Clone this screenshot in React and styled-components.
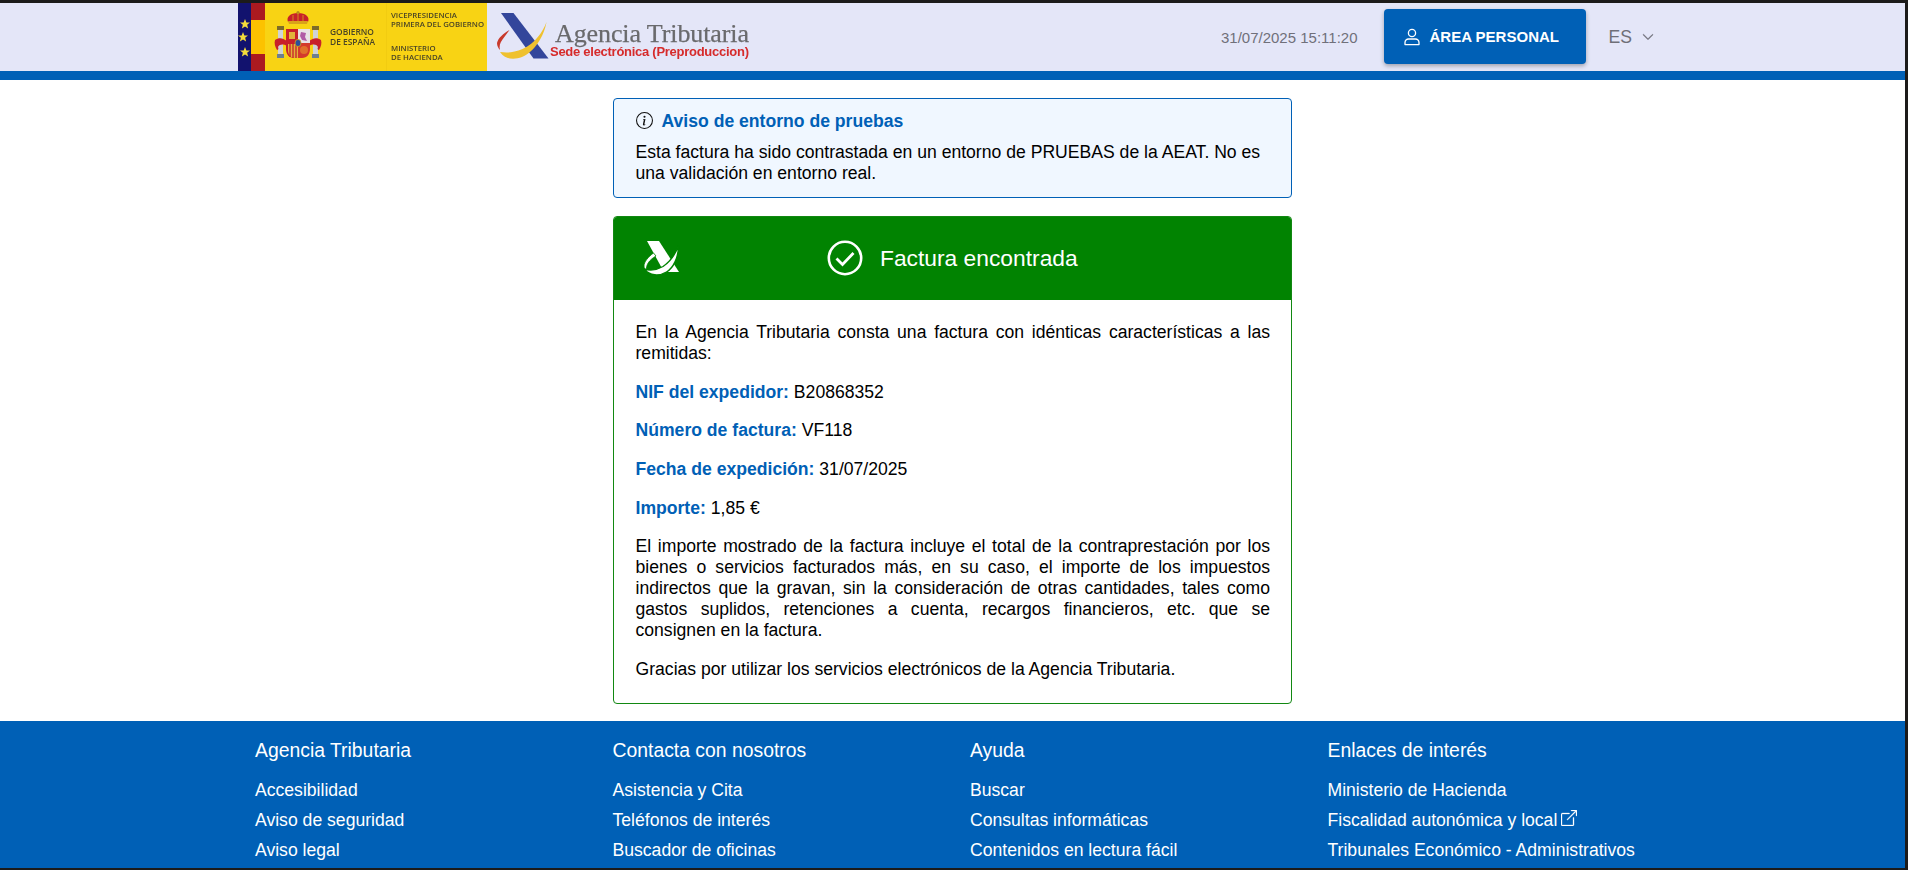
import React from 'react'
import styled, { createGlobalStyle } from 'styled-components'
import { BsInfoCircle, BsChevronDown, BsBoxArrowUpRight } from 'react-icons/bs'

const GlobalStyle = createGlobalStyle`
    html, body { margin: 0; padding: 0; background: #141210; }
    body { font-family: "Liberation Sans", Arial, sans-serif; font-size: 17.6px; line-height: 21px; color: #000; overflow: hidden; }
    * { box-sizing: border-box; }
`

const BLUE = '#0060b6'
const GREEN = '#018301'

const Frame = styled.div`
    width: 1908px;
    height: 870px;
    padding: 3px 3px 2px 0;
    background: #1c1b1a;
    overflow: hidden;
`
const Page = styled.div`
    height: 100%;
    display: flex;
    flex-direction: column;
    background: #fff;
`
const Header = styled.header`
    height: 77px;
    flex: none;
    background: #e4e6f8;
    border-bottom: 9px solid ${BLUE};
`
const HeaderInner = styled.div`
    width: 1430px;
    height: 68px;
    margin: 0 auto;
    display: flex;
    align-items: center;
`
const Logo = styled.svg`
    width: 512px;
    height: 68px;
    flex: none;
    filter: blur(0.25px);
`
const DateText = styled.span`
    margin-left: auto;
    font-size: 15px;
    color: #70707a;
`
const LoginButton = styled.a`
    width: 202px;
    height: 55px;
    margin: 0 0 1px 26px;
    padding-left: 19px;
    display: flex;
    align-items: center;
    gap: 9px;
    background: ${BLUE};
    border-radius: 4px;
    color: #fff;
    font-size: 15px;
    font-weight: bold;
    box-shadow: 0 2px 4px rgba(0, 0, 0, 0.3);
`
const LangSelect = styled.div`
    width: 59px;
    margin-left: 23px;
    display: flex;
    align-items: center;
    gap: 10px;
    color: #6f6f78;
    font-size: 17.6px;
    svg { width: 12px; height: 12px; stroke: currentColor; stroke-width: 0.8px; }
`
const Main = styled.main`
    flex: 1;
    width: 679px;
    margin: 0 auto;
    padding-top: 18px;
    display: flex;
    flex-direction: column;
    gap: 18px;
`
const Notice = styled.section`
    height: 100px;
    padding: 12px 21px 0 21.500px;
    background: #f0f7ff;
    border: 1px solid ${BLUE};
    border-radius: 4px;
`
const NoticeTitle = styled.h2`
    margin: 0 0 10px;
    display: flex;
    align-items: center;
    gap: 9px;
    font-size: 17.6px;
    line-height: 21px;
    font-weight: bold;
    color: ${BLUE};
    svg { width: 17px; height: 17px; color: #111; margin-bottom: 3px; }
`
const NoticeText = styled.p`
    margin: 0;
`
const Card = styled.section`
    height: 488px;
    border: 1px solid #128812;
    border-radius: 4px;
    overflow: hidden;
`
const CardHeader = styled.div`
    height: 84px;
    margin: -1px -1px 0;
    display: flex;
    align-items: center;
    background: ${GREEN};
    color: #fff;
    font-size: 22.8px;
`
const Mark = styled.svg`
    width: 38px;
    height: 36px;
    margin: 0 146px 0 30px;
    flex: none;
`
const CheckIcon = styled.svg`
    width: 36px;
    height: 36px;
    margin-right: 17px;
    flex: none;
`
const CardBody = styled.div`
    padding: 22.200px 21px 0 21.500px;
`
const Para = styled.p`
    margin: 0 0 17.6px;
    text-align: ${p => (p.$justify ? 'justify' : 'left')};
`
const Label = styled.strong`
    color: ${BLUE};
`
const Footer = styled.footer`
    height: 147px;
    flex: none;
    background: ${BLUE};
    color: #fff;
`
const FooterInner = styled.div`
    width: 1430px;
    margin: 0 auto;
    padding: 17px 0 0 17.500px;
    display: grid;
    grid-template-columns: repeat(4, 357.5px);
`
const FooterTitle = styled.h3`
    margin: 0 0 14px;
    font-size: 19.36px;
    line-height: 24px;
    font-weight: normal;
`
const FooterLink = styled.a`
    display: flex;
    align-items: center;
    gap: 4px;
    height: 29.8px;
    font-size: 17.6px;
    svg { width: 16px; height: 16px; margin-bottom: 6px; stroke: currentColor; stroke-width: 0.3px; }
`

const UserIcon = () => (
    <svg width="18" height="18" viewBox="0 0 18 18" fill="none" stroke="#fff" strokeWidth="1.3">
        <circle cx="9" cy="5" r="3.6" />
        <path d="M2 16.6h14v-2a3.6 3.6 0 0 0-3.6-3.6H5.6A3.6 3.6 0 0 0 2 14.6z" strokeLinejoin="round" />
    </svg>
)

// escudo simplificado, en la captura apenas se distingue
const CoatOfArms = () => (
    <g>
        <path d="M288 22c-2-5 2-9 10-9s12 4 10 9z" fill="#c8202a" />
        <path d="M289 24h18l1-3h-20z" fill="#d9a21b" />
        <circle cx="298" cy="12.5" r="1.6" fill="#b58a1a" />
        <path d="M298 13v9M293 15v7M303 15v7" stroke="#d9a21b" strokeWidth="0.8" />
        <rect x="278" y="30" width="5" height="24" fill="#cfd2d6" />
        <rect x="313" y="30" width="5" height="24" fill="#cfd2d6" />
        <rect x="277" y="26" width="7" height="4" fill="#7c6b2a" />
        <rect x="312" y="26" width="7" height="4" fill="#7c6b2a" />
        <rect x="277" y="54" width="7" height="4" fill="#6e7f8c" />
        <rect x="312" y="54" width="7" height="4" fill="#6e7f8c" />
        <path d="M275 40c4-3 8-2 12 1v5c-4-2-7-2-9 1 1 2 0 3-1 3-2-3-3-7-2-10z" fill="#c8202a" />
        <path d="M321 40c-4-3-8-2-12 1v5c4-2 7-2 9 1-1 2 0 3 1 3 2-3 3-7 2-10z" fill="#c8202a" />
        <path d="M286 29h12v29h-4c-5 0-8-4-8-9z" fill="#c8202a" />
        <path d="M298 29h12v20c0 5-3 9-8 9h-4z" fill="#d43a2c" />
        <rect x="298" y="29" width="12" height="14" fill="#e8e2e6" />
        <path d="M301 32l5 1-1 4 2 4-5-1-2-4z" fill="#b05aa6" />
        <path d="M289 32h6v7h-6z" fill="#e2b23a" />
        <path d="M288 44h10v14h-4c-3 0-6-3-6-8z" fill="#e2b23a" />
        <path d="M290 44v13M293 44v14M296 44v14" stroke="#c8202a" strokeWidth="1.3" />
        <circle cx="304" cy="50" r="4" fill="#e0702c" />
        <ellipse cx="298" cy="43" rx="3" ry="3.6" fill="#2c4f9a" stroke="#d9a21b" strokeWidth="0.8" />
    </g>
)

const Star = ({ x, y }) => (
    <polygon
        transform={`translate(${x} ${y}) scale(1.25)`}
        points="0,-4 1.1,-1.3 4,-1.2 1.7,0.6 2.5,3.5 0,1.9 -2.5,3.5 -1.7,0.6 -4,-1.2 -1.1,-1.3"
        fill="#f4dc3a"
    />
)

const SiteLogo = () => (
    <Logo viewBox="238 3 512 68">
        <rect x="238" y="3" width="13" height="68" fill="#12126e" />
        <rect x="251" y="3" width="14" height="68" fill="#ab1a20" />
        <rect x="251" y="20" width="14" height="34" fill="#fcc200" />
        <Star x={245} y={24} />
        <Star x={243} y={37} />
        <Star x={245} y={52} />
        <rect x="265" y="3" width="222" height="68" fill="#f8d314" />
        <rect x="386" y="3" width="0.6" height="68" fill="#efc90f" />
        <CoatOfArms />
        <g fontFamily="'Open Sans', 'Liberation Sans', sans-serif" fontSize="8.4" fontWeight="600" fill="#4a4526">
            <text x="330" y="35">GOBIERNO</text>
            <text x="330" y="45">DE ESPAÑA</text>
        </g>
        <g fontFamily="'Open Sans', 'Liberation Sans', sans-serif" fontSize="7.8" fontWeight="600" fill="#4a4526">
            <text x="391" y="17.5">VICEPRESIDENCIA</text>
            <text x="391" y="26.5">PRIMERA DEL GOBIERNO</text>
            <text x="391" y="50.5">MINISTERIO</text>
            <text x="391" y="59.5">DE HACIENDA</text>
        </g>
        <path d="M501 13h12.5l35 45.500h-15z" fill="#33469b" />
        <path d="M509.500 30c-6 3.500-11.500 8-12.500 13 0 3 1.500 5.500 3 7-1-4 0-7 2.500-10.500z" fill="#c8392b" />
        <path d="M500 52c5 7.500 14 8 22 5 12-5 22-20 24.500-35-3 9-12 22-24 27-8 3.500-15 4-22.500 3z" fill="#efc12f" />
        <text x="555" y="42" fontFamily="'Liberation Serif', serif" fontSize="26" fill="#6a6a6c" stroke="#6a6a6c" strokeWidth="0.25" textLength="194">Agencia Tributaria</text>
        <text x="550" y="56" fontFamily="'Liberation Sans', sans-serif" fontSize="13" fontWeight="bold" fill="#d62b2b" textLength="199">Sede electrónica (Preproduccion)</text>
    </Logo>
)

const footerColumns = [
    { title: 'Agencia Tributaria', links: ['Accesibilidad', 'Aviso de seguridad', 'Aviso legal'] },
    { title: 'Contacta con nosotros', links: ['Asistencia y Cita', 'Teléfonos de interés', 'Buscador de oficinas'] },
    { title: 'Ayuda', links: ['Buscar', 'Consultas informáticas', 'Contenidos en lectura fácil'] },
    { title: 'Enlaces de interés', links: ['Ministerio de Hacienda', 'Fiscalidad autonómica y local', 'Tribunales Económico - Administrativos'] },
]

function App() {
    return (
        <Frame>
            <GlobalStyle />
            <Page>
                <Header>
                    <HeaderInner>
                        <SiteLogo />
                        <DateText>31/07/2025 15:11:20</DateText>
                        <LoginButton><UserIcon />ÁREA PERSONAL</LoginButton>
                        <LangSelect>ES <BsChevronDown /></LangSelect>
                    </HeaderInner>
                </Header>
                <Main>
                    <Notice>
                        <NoticeTitle><BsInfoCircle />Aviso de entorno de pruebas</NoticeTitle>
                        <NoticeText>Esta factura ha sido contrastada en un entorno de PRUEBAS de la AEAT. No es una validación en entorno real.</NoticeText>
                    </Notice>
                    <Card>
                        <CardHeader>
                            <Mark viewBox="0 0 38 36">
                                <path d="M4 1h12l20 31H21z" fill="#fff" />
                                <path d="M10.500 13C5 17 1 22 1 26c0 2 1 3.500 2.500 4C3 25 6 20 13 16z" fill="#fff" stroke={GREEN} strokeWidth="0.8" />
                                <path d="M1 29C7 36 16 36.500 23.500 32 30.500 28 35.500 17 35.500 6 31.500 16 26 22.500 20 26.500 14 30 8 31 1 29z" fill="#fff" stroke={GREEN} strokeWidth="1.4" />
                            </Mark>
                            <CheckIcon viewBox="0 0 36 36" fill="none" stroke="#fff">
                                <circle cx="18" cy="18" r="16.200" strokeWidth="2.600" />
                                <path d="M9.500 18.500l6 6 11-11.500" strokeWidth="2.800" />
                            </CheckIcon>
                            Factura encontrada
                        </CardHeader>
                        <CardBody>
                            <Para $justify>En la Agencia Tributaria consta una factura con idénticas características a las remitidas:</Para>
                            <Para><Label>NIF del expedidor:</Label> B20868352</Para>
                            <Para><Label>Número de factura:</Label> VF118</Para>
                            <Para><Label>Fecha de expedición:</Label> 31/07/2025</Para>
                            <Para><Label>Importe:</Label> 1,85 €</Para>
                            <Para $justify>El importe mostrado de la factura incluye el total de la contraprestación por los bienes o servicios facturados más, en su caso, el importe de los impuestos indirectos que la gravan, sin la consideración de otras cantidades, tales como gastos suplidos, retenciones a cuenta, recargos financieros, etc. que se consignen en la factura.</Para>
                            <Para>Gracias por utilizar los servicios electrónicos de la Agencia Tributaria.</Para>
                        </CardBody>
                    </Card>
                </Main>
                <Footer>
                    <FooterInner>
                        {footerColumns.map(col => (
                            <div key={col.title}>
                                <FooterTitle>{col.title}</FooterTitle>
                                {col.links.map(link => (
                                    <FooterLink key={link}>
                                        {link}
                                        {link.startsWith('Fiscalidad') && <BsBoxArrowUpRight />}
                                    </FooterLink>
                                ))}
                            </div>
                        ))}
                    </FooterInner>
                </Footer>
            </Page>
        </Frame>
    )
}

export default App
